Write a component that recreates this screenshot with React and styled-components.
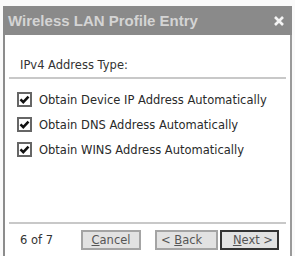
import React from "react";
import styled, { createGlobalStyle } from "styled-components";

const Global = createGlobalStyle`
  html, body { margin: 0; padding: 0; background: #fafafa; }
  body { font-family: "DejaVu Sans", Tahoma, sans-serif; }
`;

const Frame = styled.div`
  width: 289px;
  height: 250px;
  margin: 6px 0 0 3px;
  box-sizing: border-box;
  border-left: 2px solid #8c8c8c;
  border-right: 2px solid #9a9a9a;
  background: #fff;
  display: flex;
  flex-direction: column;
`;

const TitleBar = styled.div`
  height: 29px;
  margin-left: -2px;
  margin-right: -2px;
  background: #8a8a8a;
  display: flex;
  align-items: center;
  justify-content: space-between;
  padding: 0 7px 0 5px;
  color: #d4d4d4;
  font-family: "Liberation Sans", Arial, sans-serif;
  font-weight: bold;
  font-size: 15px;
`;

const Body = styled.div`
  flex: 1;
  display: flex;
  flex-direction: column;
  padding: 0 4px;
`;

const Heading = styled.div`
  font-size: 11.5px;
  color: #333;
  padding: 23px 0 0 11px;
  height: 19px;
  border-bottom: 2px solid #c8c8c8;
`;

const Options = styled.div`
  display: flex;
  flex-direction: column;
  gap: 10px;
  padding: 13px 0 0 8px;
`;

const Option = styled.label`
  display: flex;
  align-items: center;
  gap: 7px;
  font-size: 11.5px;
  color: #2a2a2a;
`;

const Box = styled.span`
  box-sizing: border-box;
  width: 15px;
  height: 15px;
  border: 2px solid #666;
  background: #fff;
  display: flex;
  align-items: center;
  justify-content: center;
`;

const Spacer = styled.div`
  flex: 1;
`;

const Footer = styled.div`
  border-top: 2px solid #c8c8c8;
  display: flex;
  align-items: flex-start;
  padding: 6px 0 6px;
`;

const Count = styled.span`
  font-size: 11.5px;
  color: #333;
  width: 72px;
  padding: 3px 0 0 11px;
  box-sizing: border-box;
`;

const Button = styled.div`
  box-sizing: border-box;
  width: ${(p) => p.$w}px;
  height: 20px;
  margin-left: ${(p) => p.$ml}px;
  border: ${(p) => (p.$def ? "2px solid #333" : "2px solid #a4a4a4")};
  background: #e2e2e2;
  font-size: 11.5px;
  color: #555;
  display: flex;
  align-items: center;
  justify-content: ${(p) => p.$align || "center"};
  padding: 0 4px;
  u { text-decoration: underline; }
`;

const Check = () => (
  <svg width="11" height="11" viewBox="0 0 11 11">
    <path d="M1.5 5.3 L4.3 8.2 L9.5 2.6" fill="none" stroke="#111" strokeWidth="2.5" />
  </svg>
);

const Close = () => (
  <svg width="12" height="12" viewBox="0 0 12 12">
    <path d="M2 2 L10 10 M10 2 L2 10" stroke="#f4f4f4" strokeWidth="2.6" />
  </svg>
);

const items = [
  "Obtain Device IP Address Automatically",
  "Obtain DNS Address Automatically",
  "Obtain WINS Address Automatically",
];

const App = () => (
  <>
    <Global />
    <Frame>
      <TitleBar>
        <span>Wireless LAN Profile Entry</span>
        <Close />
      </TitleBar>
      <Body>
        <Heading>IPv4 Address Type:</Heading>
        <Options>
          {items.map((t) => (
            <Option key={t}>
              <Box>
                <Check />
              </Box>
              {t}
            </Option>
          ))}
        </Options>
        <Spacer />
        <Footer>
          <Count>6 of 7</Count>
          <Button $w={60} $ml={0}>
            <span><u>C</u>ancel</span>
          </Button>
          <Button $w={63} $ml={14} $align="flex-start">
            <span>&lt; <u>B</u>ack</span>
          </Button>
          <Button $w={59} $ml={2} $def $align="flex-end">
            <span><u>N</u>ext &gt;</span>
          </Button>
        </Footer>
      </Body>
    </Frame>
  </>
);

export default App;
